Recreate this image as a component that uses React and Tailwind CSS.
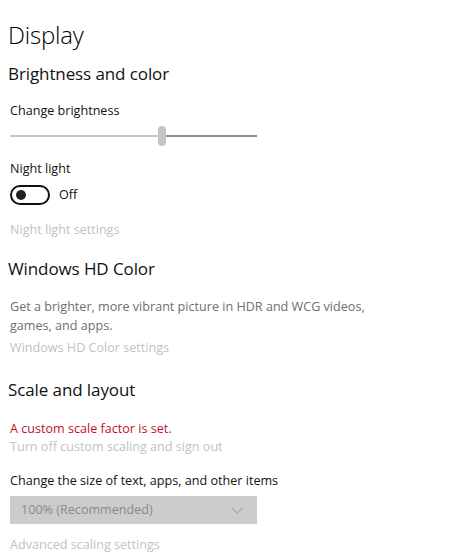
import React from 'react';

export default function App() {
  return (
    <div className="w-[474px] h-[555px] bg-white overflow-hidden font-['Open_Sans',sans-serif] text-[#000]">
      <div className="pl-2 pt-[18px]">
        <h1 className="text-[24px] leading-[34px] font-light tracking-[-0.2px]">Display</h1>
        <h2 className="mt-[10px] text-[17px] leading-[24px] tracking-[-0.1px] text-[#111]">Brightness and color</h2>

        {/* Brightness slider */}
        <div className="pl-[2px]">
          <div className="mt-[16px] text-[12.6px] leading-[18px] text-[#111]">Change brightness</div>
          <div className="relative mt-[5px] w-[247px] h-[22px] flex items-center">
            <div className="h-[2px] w-[150px] bg-[#c6c6c6]" />
            <div className="h-[2px] flex-1 bg-[#8c8c8c]" />
            <div className="absolute left-[148px] top-[1px] w-[8px] h-[20px] rounded-full bg-[#c4c4c4]" />
          </div>

          {/* Night light */}
          <div className="mt-[13px] text-[12.6px] leading-[18px] text-[#111]">Night light</div>
          <div className="mt-[7px] flex items-center">
            <div className="w-[40px] h-[20px] rounded-full border-2 border-[#111] flex items-center pl-[4px]">
              <div className="w-[10px] h-[10px] rounded-full bg-[#222]" />
            </div>
            <span className="ml-[9px] text-[12.6px] leading-[18px] text-[#111]">Off</span>
          </div>
          <div className="mt-[16px] text-[12.6px] leading-[18px] text-[#c2c2c2]">Night light settings</div>
        </div>

        <h2 className="mt-[18px] text-[17px] leading-[24px] tracking-[-0.1px] text-[#111]">Windows HD Color</h2>
        <div className="pl-[2px]">
          <p className="mt-[16px] text-[12.6px] leading-[19px] text-[#6e6e6e] w-[370px]">
            Get a brighter, more vibrant picture in HDR and WCG videos, games, and apps.
          </p>
          <div className="mt-[4px] text-[12.6px] leading-[18px] text-[#c2c2c2]">Windows HD Color settings</div>
        </div>

        <h2 className="mt-[21px] text-[17px] leading-[24px] tracking-[-0.1px] text-[#111]">Scale and layout</h2>
        <div className="pl-[2px]">
          <div className="mt-[18px] text-[12.6px] leading-[18px] text-[#c50f1f]">A custom scale factor is set.</div>
          <div className="text-[12.6px] leading-[18px] text-[#c2c2c2]">Turn off custom scaling and sign out</div>
          <div className="mt-[16px] text-[12.6px] leading-[18px] text-[#111]">Change the size of text, apps, and other items</div>
          <div className="mt-[6px] w-[247px] h-[28px] bg-[#cccccc] flex items-center justify-between pl-[11px] pr-[14px]">
            <span className="text-[12.6px] text-[#8a8a8a]">100% (Recommended)</span>
            <svg width="12" height="7" viewBox="0 0 12 7" fill="none">
              <path d="M1 1l5 5 5-5" stroke="#a8a8a8" strokeWidth="1.1" />
            </svg>
          </div>
          <div className="mt-[12px] text-[12.6px] leading-[18px] text-[#c2c2c2]">Advanced scaling settings</div>
        </div>
      </div>
    </div>
  );
}
